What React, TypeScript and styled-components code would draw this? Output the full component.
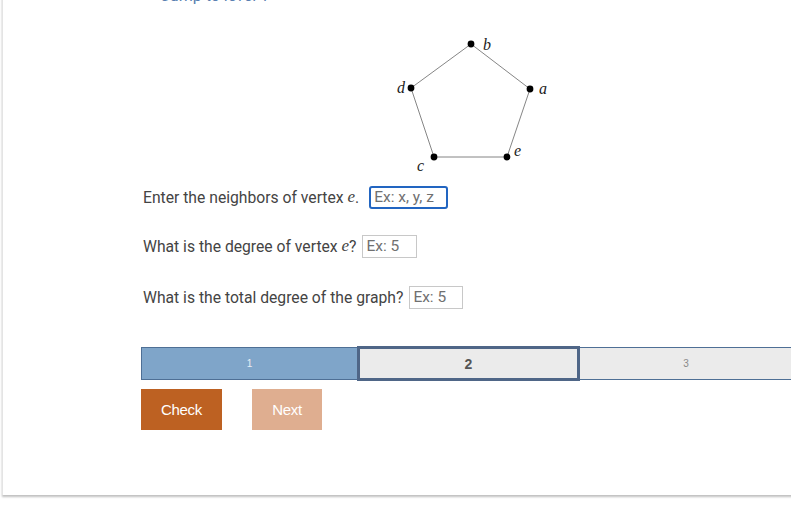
import React from 'react';
import styled, { createGlobalStyle } from 'styled-components';

const GlobalStyle = createGlobalStyle`
  html, body {
    margin: 0;
    padding: 0;
    background: #ffffff;
    overflow: hidden;
  }
  body {
    font-family: Roboto, "Noto Sans", sans-serif;
  }
`;

const Page = styled.div`
  width: 791px;
  height: 508px;
  overflow: hidden;
`;

const Card = styled.div`
  margin-top: -10px;
  margin-left: 2px;
  width: 840px;
  height: 505px;
  box-sizing: border-box;
  border-left: 1px solid #e4e4e4;
  background: #fff;
  box-shadow: 0 2px 2px rgba(0, 0, 0, 0.25);
`;

const Content = styled.div`
  padding-left: 138px;
  width: 658px;
  display: flex;
  flex-direction: column;
`;

const JumpLink = styled.a`
  display: block;
  margin-top: -4px;
  margin-left: 20px;
  height: 44px;
  line-height: 19px;
  font-family: Roboto, sans-serif;
  font-size: 16px;
  color: #5a7fb1;
  text-decoration: none;
`;

const Figure = styled.div`
  display: flex;
  justify-content: center;
  height: 146px;
  padding-left: 10px;
`;

const Question = styled.div`
  display: flex;
  align-items: center;
  height: 24px;
  margin-left: 2px;
  margin-top: ${(p: { $gap: number }) => p.$gap}px;
  font-size: 15.7px;
  color: #444;
  white-space: pre;
`;

const Var = styled.span`
  font-family: "Liberation Serif", serif;
  font-style: italic;
  font-size: 17px;
`;

const Field = styled.input<{ $w: number; $focus?: boolean; $gap?: number }>`
  width: ${(p) => p.$w}px;
  height: 23px;
  box-sizing: border-box;
  margin-left: ${(p) => p.$gap ?? 6}px;
  padding: 0 3px;
  font-family: Roboto, sans-serif;
  font-size: 15.5px;
  border: ${(p) => (p.$focus ? '2px solid #2265c1' : '1px solid #c8c8c8')};
  border-radius: ${(p) => (p.$focus ? '3px' : '0')};
  outline: none;
  &::placeholder {
    color: #707070;
  }
`;

const Progress = styled.div`
  display: flex;
  margin-top: 37px;
  height: 35px;
  align-items: center;
`;

const Segment = styled.div<{ $state: 'done' | 'current' | 'todo'; $w: number }>`
  flex: 0 0 ${(p) => p.$w}px;
  box-sizing: border-box;
  display: flex;
  align-items: center;
  justify-content: center;
  font-family: "Liberation Sans", Arial, sans-serif;
  ${(p) =>
    p.$state === 'done'
      ? `height: 33px; background: #7fa5c9; border: 1px solid #4e6f95; border-right: none; color: #e8eef5; font-size: 10px;`
      : p.$state === 'current'
      ? `height: 35px; background: #ebebeb; border: 3px solid #4f6687; color: #555; font-size: 14px; font-weight: bold;`
      : `height: 33px; background: #ebebeb; border-top: 1px solid #4e6f95; border-bottom: 1px solid #4e6f95; color: #8a8a8a; font-size: 10px;`}
`;

const Actions = styled.div`
  display: flex;
  gap: 30px;
  margin-top: 8px;
`;

const Button = styled.button<{ $w: number; $muted?: boolean }>`
  width: ${(p) => p.$w}px;
  height: 41px;
  border: none;
  border-radius: 0;
  background: ${(p) => (p.$muted ? '#dfae90' : '#bd6122')};
  color: #fff;
  font-family: "Liberation Sans", Arial, sans-serif;
  font-size: 15px;
  letter-spacing: -0.3px;
  padding: 0;
`;

const Graph: React.FC = () => {
  const pts: Record<string, [number, number]> = {
    b: [76, 14],
    a: [135, 59],
    e: [112, 127],
    c: [39, 127],
    d: [16, 58],
  };
  const edges: [string, string][] = [
    ['b', 'a'],
    ['a', 'e'],
    ['e', 'c'],
    ['c', 'd'],
    ['d', 'b'],
  ];
  const labels: [string, number, number][] = [
    ['b', 88, 20],
    ['a', 144, 64],
    ['e', 119, 126],
    ['c', 22, 141],
    ['d', 2, 63],
  ];
  return (
    <svg width="160" height="146" viewBox="0 0 160 146">
      {edges.map(([u, v]) => (
        <line
          key={u + v}
          x1={pts[u][0]}
          y1={pts[u][1]}
          x2={pts[v][0]}
          y2={pts[v][1]}
          stroke="#666"
          strokeWidth="0.8"
        />
      ))}
      {Object.entries(pts).map(([k, [x, y]]) => (
        <circle key={k} cx={x} cy={y} r="3.4" fill="#000" />
      ))}
      {labels.map(([t, x, y]) => (
        <text
          key={t}
          x={x}
          y={y}
          fontFamily="Liberation Serif, serif"
          fontStyle="italic"
          fontSize="16"
          fill="#222"
        >
          {t}
        </text>
      ))}
    </svg>
  );
};

const App: React.FC = () => {
  return (
    <Page>
      <GlobalStyle />
      <Card>
        <Content>
          <JumpLink href="#">Jump to level 1</JumpLink>
          <Figure>
            <Graph />
          </Figure>
          <Question $gap={9}>
            Enter the neighbors of vertex <Var>e</Var>.
            <Field $w={79} $gap={10} $focus placeholder="Ex: x, y, z" />
          </Question>
          <Question $gap={25}>
            What is the degree of vertex <Var>e</Var>?
            <Field $w={55} placeholder="Ex: 5" />
          </Question>
          <Question $gap={27}>
            What is the total degree of the graph?
            <Field $w={54} placeholder="Ex: 5" />
          </Question>
          <Progress>
            <Segment $state="done" $w={216}>1</Segment>
            <Segment $state="current" $w={223}>2</Segment>
            <Segment $state="todo" $w={212}>3</Segment>
          </Progress>
          <Actions>
            <Button $w={81}>Check</Button>
            <Button $w={70} $muted>
              Next
            </Button>
          </Actions>
        </Content>
      </Card>
    </Page>
  );
};

export default App;
